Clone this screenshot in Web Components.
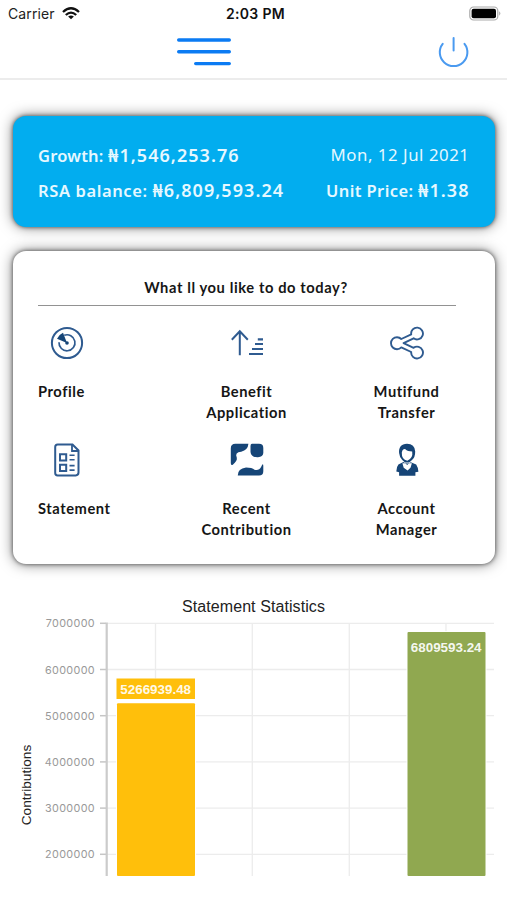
<!DOCTYPE html>
<html lang="en">
<head>
<meta charset="utf-8">
<title>Pension Dashboard</title>
<style>
    body {
        margin: 0;
        height: 900px;
        overflow: hidden;
        background: #fff;
    }
</style>
</head>
<body>
<pension-app></pension-app>

<script>
function defineElement(name, html) {
    const template = document.createElement('template');
    template.innerHTML = html;

    window.customElements.define(name, class extends HTMLElement {
        constructor() {
            super();
            this.attachShadow({mode: 'open'});
            this.shadowRoot.appendChild(template.content.cloneNode(true));
        }
    });
}

defineElement('status-bar', `
    <style>
        :host {
            box-sizing: border-box;
            display: grid;
            grid-template-columns: 1fr auto 1fr;
            align-items: center;
            height: 27px;
            padding: 0 6px 0 8px;
            font: 14px Inter, sans-serif;
            color: #222;
        }

        .carrier {
            display: flex;
            align-items: center;
            gap: 7px;
            letter-spacing: 0.1px;
        }

        .time {
            font-weight: 600;
            font-size: 14px;
            letter-spacing: 0.3px;
            padding-left: 2px;
            color: #111;
        }

        .battery {
            justify-self: end;
        }

        svg {
            display: block;
        }
    </style>
    <div class="carrier">
        <span>Carrier</span>
        <svg width="18" height="13" viewBox="0 0 18 13" fill="none" stroke="#111" stroke-width="2.3">
            <path d="M1 5 Q9 -2.4 17 5"/>
            <path d="M3.8 8 Q9 3.2 14.2 8"/>
            <path d="M9 12.3 L6.1 9.5 Q9 7.3 11.9 9.5 Z" fill="#111" stroke="none"/>
        </svg>
    </div>
    <div class="time">2:03 PM</div>
    <svg class="battery" width="32" height="15" viewBox="0 0 32 15">
        <rect x="0.8" y="1" width="28" height="13" rx="3.8" fill="#fff" stroke="#aaa" stroke-width="1.2"/>
        <rect x="2.6" y="2.8" width="24.4" height="9.4" rx="2" fill="#000"/>
        <path d="M30.3 5.3 Q32.3 7.5 30.3 9.7 Z" fill="#999"/>
    </svg>`);

defineElement('nav-header', `
    <style>
        :host {
            box-sizing: border-box;
            display: flex;
            justify-content: space-between;
            height: 53px;
            padding: 8px 36px 0 175px;
            border-bottom: 2px solid #ececec;
        }

        svg {
            display: block;
        }
    </style>
    <svg width="58" height="34" viewBox="0 0 58 34" fill="none" stroke="#0b7bf3" stroke-width="3.4" stroke-linecap="round">
        <path d="M3.7 5H54.3M3.7 16.8H54.3M20.7 28.6H54.3"/>
    </svg>
    <svg width="34" height="34" viewBox="0 0 34 34" fill="none" stroke="#4a9af0" stroke-width="2" stroke-linecap="round">
        <path d="M5.7 8.8A13.8 13.8 0 1 0 27.5 8.8"/>
        <path d="M16.6 3V15.4"/>
    </svg>`);

defineElement('shadow-card', `
    <style>
        :host {
            box-sizing: border-box;
            display: block;
            border-radius: 13px;
            background: var(--card-color, #fff);
            box-shadow: 0 0 4px rgba(0, 0, 0, 0.6), 0 0 14px rgba(0, 0, 0, 0.5);
        }
    </style>
    <slot></slot>`);

defineElement('balance-summary', `
    <style>
        :host {
            display: grid;
            grid-template-columns: auto auto;
            justify-content: space-between;
            grid-auto-rows: 34.5px;
            align-items: center;
            padding: 22.5px 25px 0 25px;
            font: 600 16.5px "Noto Sans", sans-serif;
            letter-spacing: 0.2px;
            color: #e6f8ff;
            white-space: nowrap;
        }

        .date {
            font-weight: 400;
            font-size: 16.8px;
            letter-spacing: 0.55px;
            justify-self: end;
            padding-bottom: 2px;
        }

        .rsa {
            letter-spacing: 0.6px;
        }

        .unit {
            justify-self: end;
            letter-spacing: 0.4px;
        }

        .amount {
            font-size: 18px;
            letter-spacing: 1.05px;
        }
    </style>
    <div class="growth">Growth: <span class="amount">₦1,546,253.76</span></div>
    <div class="date">Mon, 12 Jul 2021</div>
    <div class="rsa">RSA balance: <span class="amount">₦6,809,593.24</span></div>
    <div class="unit">Unit Price: <span class="amount">₦1.38</span></div>`);

defineElement('action-item', `
    <style>
        :host {
            display: flex;
            flex-direction: column;
            align-items: center;
            font: 700 14.7px/21.5px Lato, sans-serif;
            letter-spacing: 0.55px;
            text-align: center;
            color: #161616;
        }

        :host([start]) {
            align-items: flex-start;
        }

        :host([start]) .icon {
            margin-left: 12px;
        }

        .icon {
            height: 34px;
            margin-bottom: 21px;
        }
    </style>
    <div class="icon"><slot name="icon"></slot></div>
    <div class="label"><slot></slot></div>`);

defineElement('action-menu', `
    <style>
        :host {
            display: block;
            padding: 0 9px 0 25px;
        }

        h2 {
            box-sizing: border-box;
            width: 418px;
            height: 55px;
            margin: 0 0 20px;
            padding: 26px 2px 0 0;
            border-bottom: 1.5px solid #929292;
            font: 700 14.7px/21px Lato, sans-serif;
            letter-spacing: 0.6px;
            text-align: center;
            color: #161616;
        }

        .actions {
            display: grid;
            grid-template-columns: 128.5px 160px 160px;
            grid-auto-rows: 117px;
        }

        svg {
            display: block;
            width: 34px;
            height: 34px;
            fill: none;
            stroke: #2f5b90;
            stroke-width: 2;
        }

        .solid {
            fill: #164577;
            stroke: none;
        }
    </style>
    <h2>What ll you like to do today?</h2>
    <div class="actions">
        <action-item start>
            <svg slot="icon" viewBox="0 0 34 34">
                <circle cx="17" cy="17" r="15.1"/>
                <path d="M14.2 9.3A8 8 0 1 1 9 16.3" stroke-width="1.7"/>
                <path d="M17 17L7 12.7Q8.7 8.8 13 6.8Z" fill="#164577" stroke="none"/>
                <circle cx="17" cy="17" r="1.8" class="solid"/>
            </svg>Profile</action-item>
        <action-item>
            <svg slot="icon" viewBox="0 0 34 34">
                <path d="M9.8 29.2V5.5M1.8 13.7L9.8 5.3L17.8 13.7"/>
                <path d="M27.8 13.3H33M25 18H33M22 23H33M19 28H33" stroke-width="2.2"/>
            </svg>Benefit<br>Application</action-item>
        <action-item>
            <svg slot="icon" viewBox="0 0 34 34" stroke-linejoin="round">
                <path d="M11.3 13L21.2 8.4A5.9 5.9 0 1 1 23.6 12.3L13.6 17.2L23.6 21.8A5.9 5.9 0 1 1 21.2 26L11.3 21.4A6 6 0 1 1 11.3 13Z" stroke-width="1.9"/>
            </svg>Mutifund<br>Transfer</action-item>
        <action-item start>
            <svg slot="icon" viewBox="0 0 34 34">
                <path d="M7.6 1.5H22.5L28.5 7.5V29.6Q28.5 32.4 25.7 32.4H7.6Q5.2 32.4 5.2 30V4Q5.2 1.5 7.6 1.5Z"/>
                <path d="M22 2V8H28" stroke-width="1.8"/>
                <path d="M10 11.3H16.2V17.4H10ZM10 21.8H16.2V27.9H10Z"/>
                <path d="M19.5 12.2H24.6M19.5 16.8H24.6M19.5 22.6H24.6M19.5 27.1H24.6" stroke-width="1.6"/>
            </svg>Statement</action-item>
        <action-item>
            <svg slot="icon" class="solid" viewBox="0 0 34 34">
                <path d="M5.4 0.8H18.4Q18 7 11.2 8.8Q4.4 9.3 6.8 14.8Q7.5 18 2.8 21.7Q.8 23 .8 20V5.4Q.8 .8 5.4 .8Z"/>
                <path d="M22 .8H29Q33.3 .8 33.3 5V10Q33 14 28 14.2Q21 14.5 20.5 9V3Q20.5 .8 22 .8Z"/>
                <path d="M7.8 32.6Q7.5 25.6 16 24.4Q22 24.4 24.5 26.7Q29 28 31.2 23.7Q33.3 19.4 33.3 23V28.2Q33.3 32.6 29 32.6Z"/>
            </svg>Recent<br>Contribution</action-item>
        <action-item>
            <svg slot="icon" class="solid" viewBox="0 0 34 34">
                <path fill-rule="evenodd" d="M17 .8C11.2 .8 8.6 4.7 9.1 10Q9.5 14.5 12.3 17.1L15 19.5H19.2L22 17.1Q25.2 14.6 25.2 8.5Q24.7 .8 17 .8ZM12.4 7.5Q14.6 4.9 16.2 6.9Q17.4 8 22.2 8.6Q23.3 15.3 17.3 17.7Q11.5 16.5 11.8 9.5Z"/>
                <path d="M13.4 19Q17.2 22 20.8 19.3L26.2 21.5Q28.2 24.5 28.4 28.7L25.4 29.2V32.7H9.1V29.2L6.3 28.4Q6.3 24 8.4 21.5Z"/>
                <path d="M12.4 20.3L15.3 20.2L17.2 22L19 20.2L21.9 20.3L20.5 24.8L17.6 27.5L13.7 24.7Z" fill="#fff"/>
            </svg>Account<br>Manager</action-item>
    </div>`);

const chartTemplate = document.createElement('template');
chartTemplate.innerHTML = `
    <style>
        :host {
            display: block;
            font-family: "Liberation Sans", Arial, sans-serif;
        }

        h3 {
            margin: 0;
            font-size: 16px;
            line-height: 20px;
            height: 18px;
            font-weight: 400;
            letter-spacing: 0.08px;
            text-align: center;
            color: #222;
        }

        svg {
            display: block;
        }

        .grid { stroke: #ececec; stroke-width: 1.3; }
        .tick { stroke: #c6c6c6; stroke-width: 1.5; }
        .axis { stroke: #cbcbcb; stroke-width: 2.2; }
        .tick-label { font: 10.8px Inter, sans-serif; letter-spacing: 0.35px; fill: #999; }
        .axis-title { font-size: 13.7px; fill: #222; }
        .value { font-size: 13.4px; font-weight: 700; fill: #fff; fill-opacity: 0.93; }
    </style>
    <h3>Statement Statistics</h3>
    <svg width="507" height="261" viewBox="0 615 507 261"></svg>`;

const BARS = [
    {x: 117, value: 5266939.48, color: '#ffbf0b', labelY: 679},
    {x: 407.5, value: 6809593.24, color: '#90a850', labelY: 637},
];

class StatisticsChart extends HTMLElement {
    constructor() {
        super();
        this.attachShadow({mode: 'open'});
        this.shadowRoot.appendChild(chartTemplate.content.cloneNode(true));
    }

    connectedCallback() {
        const toY = value => 623.3 + (7000000 - value) * 46.2 / 1000000;
        let marks = '';
        for (let x of [155.5, 252.3, 349.3, 446]) {
            marks += `<line class="grid" x1="${x}" x2="${x}" y1="623" y2="876"/>`;
        }
        for (let value = 7000000; value >= 2000000; value -= 1000000) {
            const y = toY(value);
            marks += `<line class="grid" x1="107" x2="494" y1="${y}" y2="${y}"/>
                <line class="tick" x1="100" x2="106" y1="${y}" y2="${y}"/>
                <text class="tick-label" x="95" y="${y + 4.1}" text-anchor="end">${value}</text>`;
        }
        marks += '<line class="axis" x1="106.7" x2="106.7" y1="622.5" y2="876"/>';
        for (let bar of BARS) {
            const top = toY(bar.value);
            // white edge keeps the grid lines off the bar
            marks += `<rect x="${bar.x - 1}" y="${top - 1}" width="80" height="${877 - top}" fill="#fff"/>
                <rect x="${bar.x}" y="${top}" width="78" height="${876 - top}" rx="1" fill="${bar.color}"/>`;
            if (bar.labelY < top + 1) {
                marks += `<rect x="${bar.x - 0.5}" y="${bar.labelY - 0.5}" width="78.5" height="24.5" fill="#fff"/>
                    <rect x="${bar.x - 0.5}" y="${bar.labelY - 0.5}" width="78.5" height="20.5" fill="${bar.color}"/>`;
            }
            marks += `<text class="value" x="${bar.x + 38.7}" y="${bar.labelY + 15}" text-anchor="middle">${bar.value}</text>`;
        }
        marks += '<text class="axis-title" transform="translate(31 785) rotate(-90)" text-anchor="middle">Contributions</text>';
        this.shadowRoot.querySelector('svg').innerHTML = marks;
    }
}

window.customElements.define('statistics-chart', StatisticsChart);

defineElement('pension-app', `
    <style>
        :host {
            display: block;
            width: 507px;
            height: 900px;
            overflow: hidden;
            background: #fff;
        }

        main {
            display: flex;
            flex-direction: column;
            gap: 24px;
            padding: 35.5px 12.5px 0 13px;
        }

        .balance {
            --card-color: #02adef;
            height: 111px;
        }

        .menu {
            height: 313.5px;
        }

        statistics-chart {
            margin-top: 33px;
        }
    </style>
    <status-bar></status-bar>
    <nav-header></nav-header>
    <main>
        <shadow-card class="balance"><balance-summary></balance-summary></shadow-card>
        <shadow-card class="menu"><action-menu></action-menu></shadow-card>
    </main>
    <statistics-chart></statistics-chart>`);
</script>
</body>
</html>
